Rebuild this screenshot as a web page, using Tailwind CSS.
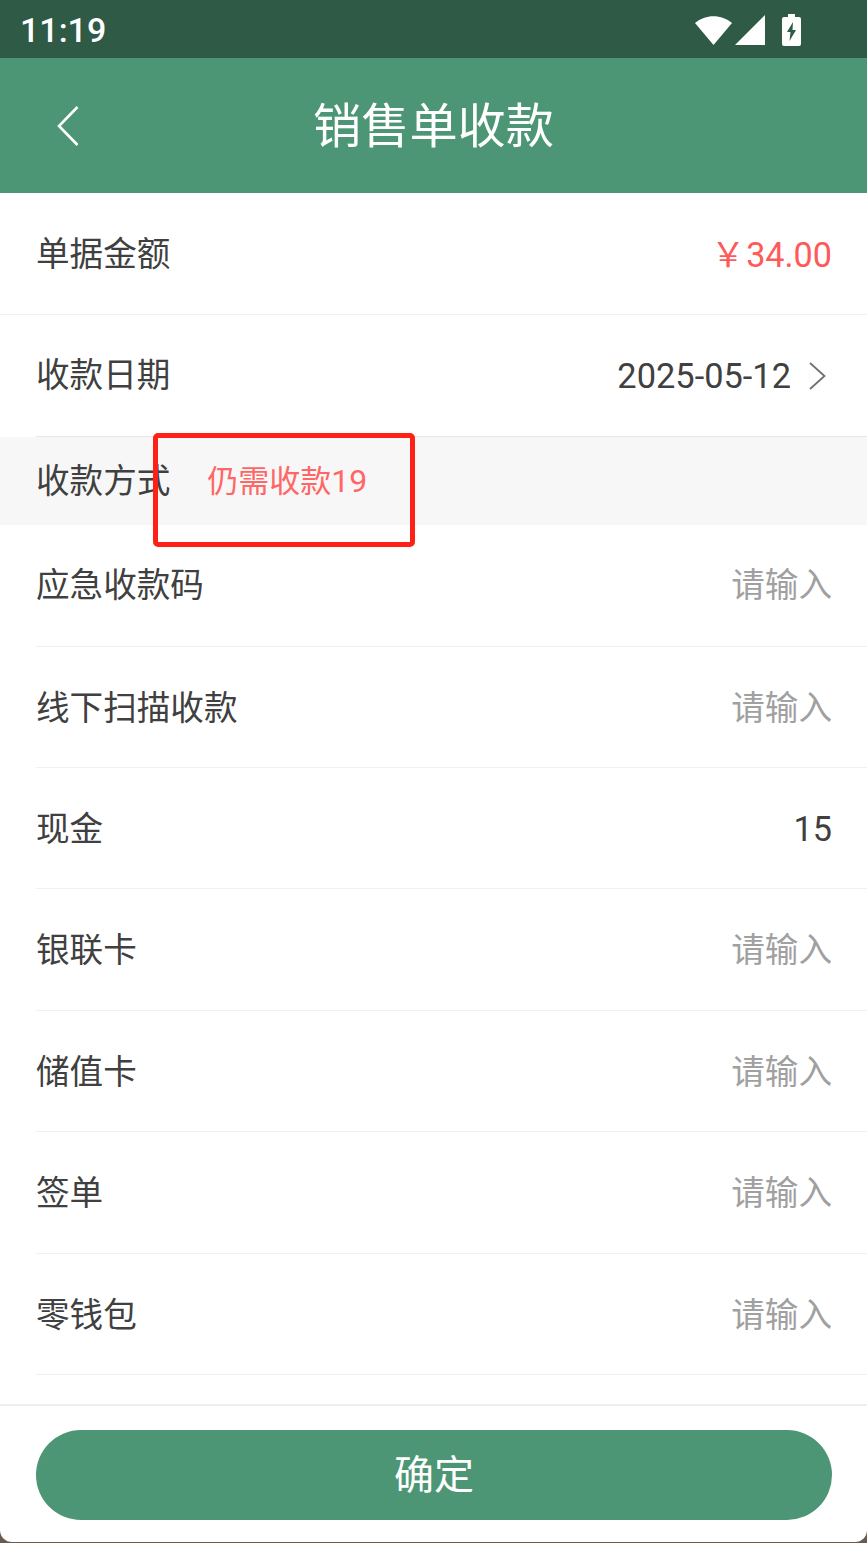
<!DOCTYPE html>
<html lang="zh">
<head>
<meta charset="utf-8">
<script src="https://cdn.jsdelivr.net/npm/@tailwindcss/browser@4"></script>
</head>
<body class="bg-[#6b5a4e] font-['Roboto','Noto_Sans_CJK_SC',sans-serif]">
<div class="relative w-[867px] h-[1542px] overflow-hidden bg-white text-[33.6px] text-[#404040] flex flex-col rounded-b-[12px]">
  <div class="h-[58px] shrink-0 bg-[#2e5a46] flex items-center justify-between pl-[20px] pr-[66px] pt-[1px] text-white">
    <span class="text-[34px] font-medium leading-none">11:19</span>
    <div class="flex items-center gap-[3px]">
      <svg width="37" height="31" viewBox="0 0 37 31"><path d="M0 9 C10.5 0 26.5 0 37 9 L18.5 31 Z" fill="#fff"/></svg>
      <svg width="30" height="30" viewBox="0 0 30 30"><path d="M30 0 V30 H0 Z" fill="#fff"/></svg>
      <svg class="ml-[14px]" width="19" height="32" viewBox="0 0 19 32"><path fill-rule="evenodd" fill="#fff" d="M6 0 H13 V3 H17 Q19 3 19 5 V30 Q19 32 17 32 H2 Q0 32 0 30 V5 Q0 3 2 3 H6 Z M11 8 L5 18 H8.5 L7.5 27 L14 16 H10.5 Z"/></svg>
    </div>
  </div>
  <div class="h-[135px] shrink-0 bg-[#4d9675] relative flex items-center justify-center pt-[4px] text-white">
    <svg class="absolute left-[57px] top-[48px]" width="22" height="40" viewBox="0 0 22 40" fill="none" stroke="#fff" stroke-width="2.6"><path d="M20.5 1 L2 20 L20.5 39"/></svg>
    <span class="text-[48.2px] leading-none">销售单收款</span>
  </div>

  <div class="h-[122px] shrink-0 pl-[36px] pr-[35px] pt-[4px] flex items-center justify-between border-b border-[#f0f0f0]">
    <span>单据金额</span>
    <span class="text-[#ff5a5a] text-[34.2px]"><span class="mr-[1px]">￥</span>34.00</span>
  </div>
  <div class="h-[122px] shrink-0 ml-[36px] pr-[41px] pt-[2px] flex items-center justify-between border-b border-[#e6e6e6]">
    <span>收款日期</span>
    <span class="flex items-center gap-[18px] text-[34.4px]">2025-05-12
      <svg width="17" height="28" viewBox="0 0 17 28" fill="none" stroke="#707070" stroke-width="1.8"><path d="M1 1 L15.5 14 L1 27"/></svg>
    </span>
  </div>
  <div class="h-[88px] shrink-0 bg-[#f7f7f7] pl-[36px] flex items-center">
    <span class="pt-[2px]">收款方式</span>
    <span class="ml-[37px] text-[31px] text-[#ff6666]">仍需收款<span class="text-[32px]">19</span></span>
  </div>

  <div class="h-[122px] shrink-0 ml-[36px] pr-[35px] pt-[2px] flex items-center justify-between border-b border-[#f0f0f0]"><span>应急收款码</span><span class="text-[#a0a0a0]">请输入</span></div>
  <div class="h-[121px] shrink-0 ml-[36px] pr-[35px] pt-[4px] flex items-center justify-between border-b border-[#f0f0f0]"><span>线下扫描收款</span><span class="text-[#a0a0a0]">请输入</span></div>
  <div class="h-[121px] shrink-0 ml-[36px] pr-[35px] pt-[4px] flex items-center justify-between border-b border-[#f0f0f0]"><span>现金</span><span class="text-[34.2px]">15</span></div>
  <div class="h-[122px] shrink-0 ml-[36px] pr-[35px] pt-[4px] flex items-center justify-between border-b border-[#f0f0f0]"><span>银联卡</span><span class="text-[#a0a0a0]">请输入</span></div>
  <div class="h-[121px] shrink-0 ml-[36px] pr-[35px] pt-[4px] flex items-center justify-between border-b border-[#f0f0f0]"><span>储值卡</span><span class="text-[#a0a0a0]">请输入</span></div>
  <div class="h-[122px] shrink-0 ml-[36px] pr-[35px] pt-[4px] flex items-center justify-between border-b border-[#f0f0f0]"><span>签单</span><span class="text-[#a0a0a0]">请输入</span></div>
  <div class="h-[121px] shrink-0 ml-[36px] pr-[35px] pt-[4px] flex items-center justify-between border-b border-[#f0f0f0]"><span>零钱包</span><span class="text-[#a0a0a0]">请输入</span></div>

  <div class="mt-[29px] flex-1 border-t-2 border-[#eeeeee] pl-[36px] pr-[35px] pt-[24px]">
    <div class="h-[90px] rounded-full bg-[#4d9675] flex items-center justify-center pt-[1px] text-white text-[40px]">确定</div>
  </div>

  <div class="absolute left-[153px] top-[433px] w-[262px] h-[114px] border-[5px] border-[#ff2016] rounded-[5px]"></div>
</div>
</body>
</html>
